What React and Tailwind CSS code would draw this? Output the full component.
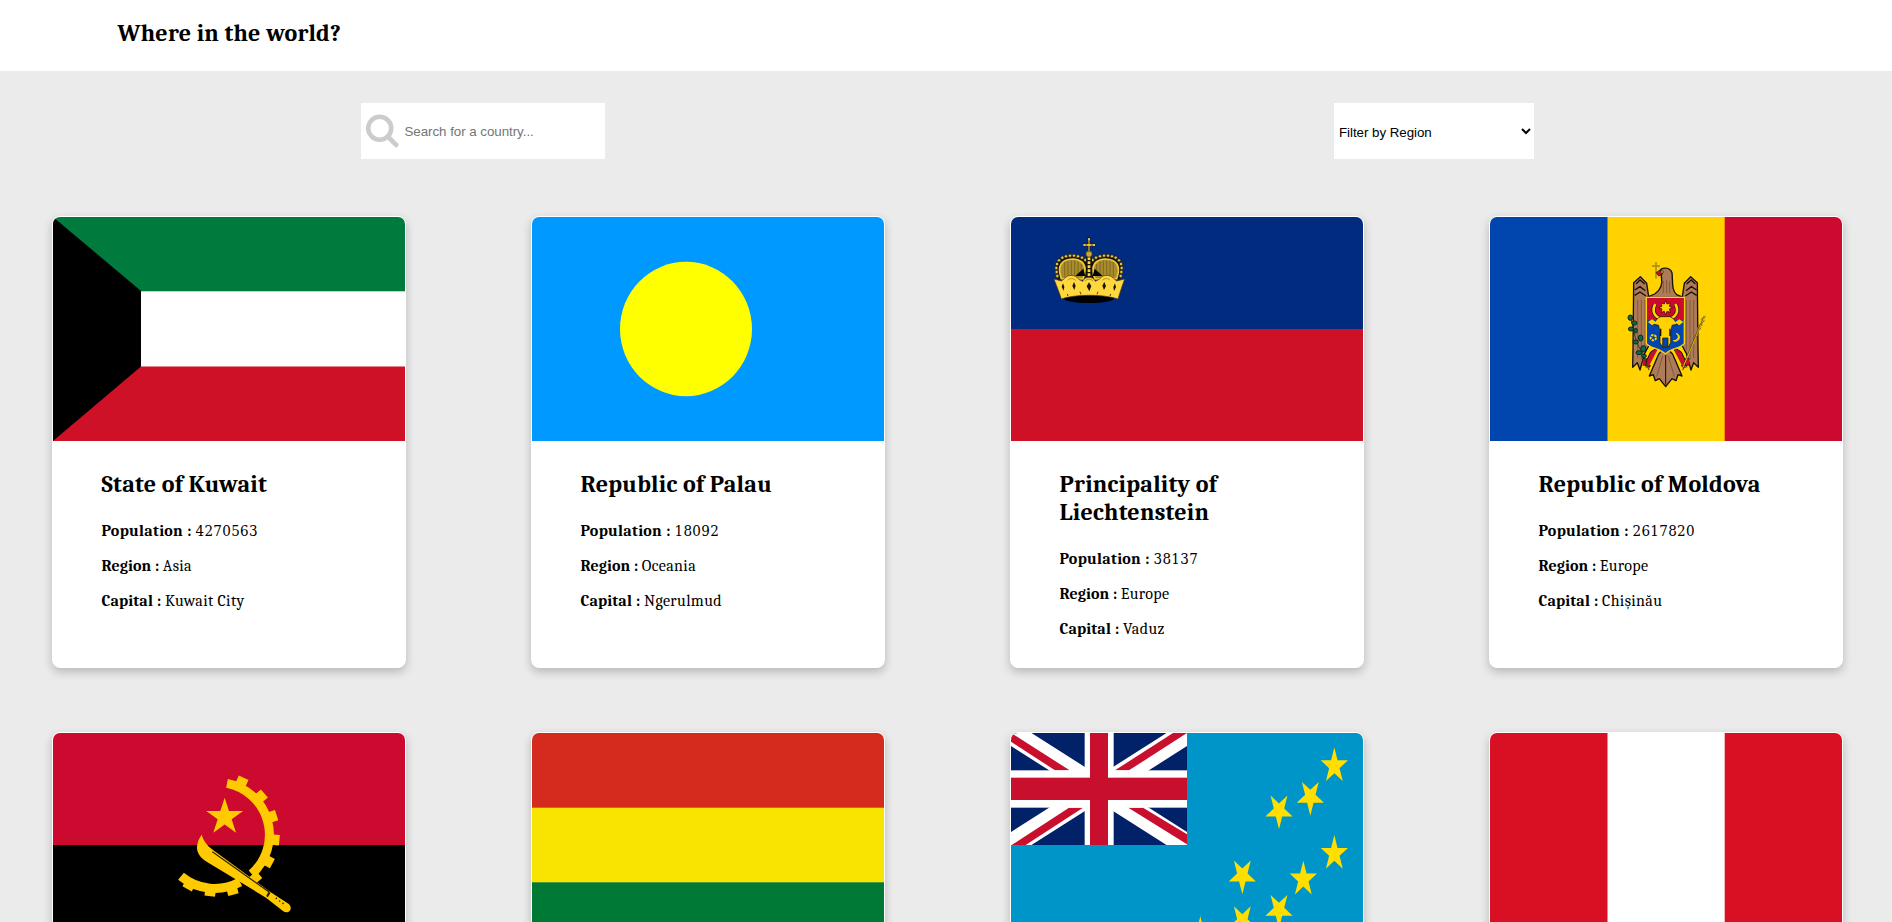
import React from "react";

function starPoints(cx, cy, rx, ry, down = false) {
  const pts = [];
  for (let i = 0; i < 10; i++) {
    const k = i % 2 ? 0.382 : 1;
    const a = (Math.PI / 5) * i;
    const dy = -Math.cos(a) * ry * k;
    pts.push(`${cx + Math.sin(a) * rx * k},${cy + (down ? -dy : dy)}`);
  }
  return pts.join(" ");
}

function Flag({ children }) {
  return (
    <svg viewBox="0 0 352 224" preserveAspectRatio="none" className="block h-[224px] w-full rounded-t-[7px]">
      {children}
    </svg>
  );
}

const Kuwait = () => (
  <Flag>
    <rect width="352" height="224" fill="#fff" />
    <rect width="352" height="74.300" fill="#007a3d" />
    <rect y="149.500" width="352" height="74.500" fill="#ce1126" />
    <path d="M0 0 88 74v75.500L0 224z" fill="#000" />
  </Flag>
);

const Palau = () => (
  <Flag>
    <rect width="352" height="224" fill="#0099ff" />
    <ellipse cx="154" cy="112" rx="66" ry="67.200" fill="#ffff00" />
  </Flag>
);

function Crown() {
  const beads = [
    [82, 168], [80, 156], [79, 144], [81, 132], [87, 121], [97, 113], [108, 109], [120, 107], [132, 107], [144, 109], [156, 113], [166, 120],
  ];
  return (
    <g transform="translate(19 3) scale(.33333)">
      <path d="M84 178C74 140 82 112 118 108c26-2 48 6 59 20 11-14 33-22 59-20 36 4 44 32 34 70z" fill="#111" />
      <path d="M94 176c-14-38 0-58 34-59 22 0 36 12 37 30 0 14-2 22-6 30zM260 176c14-38 0-58-34-59-22 0-36 12-37 30 0 14 2 22 6 30z" fill="#a88c2e" stroke="#f0ca3c" strokeWidth="5" />
      <path d="M104 126v44M114 122v44M124 122v44M134 122v44M144 124v40M154 132v34M250 126v44M240 122v44M230 122v44M220 122v44M210 124v40M200 132v34" stroke="#6b571a" strokeWidth="2" />
      <path d="M136 168l24-22 6 22zM218 168l-24-22-6 22z" fill="#000" />
      {beads.map(([x, y]) => (
        <g key={`${x}-${y}`} fill="#e6c244" stroke="#1c1808" strokeWidth="2">
          <circle cx={x} cy={y} r="5" />
          <circle cx={354 - x} cy={y} r="5" />
        </g>
      ))}
      <path d="M177 112v62" stroke="#1a1505" strokeWidth="17" />
      <path d="M177 112v56" stroke="#ffd83d" strokeWidth="8" strokeDasharray="8 4" />
      <circle cx="177" cy="102" r="9.500" fill="#c9a838" stroke="#3f330e" strokeWidth="2" />
      <path d="M177 52v42M160 75h35" stroke="#15140c" strokeWidth="8" />
      <path d="M177 55v38M163 75h29" stroke="#c9a838" strokeWidth="4" />
      <path d="M174 58h6M163 72v6M192 72v6M172 75h10" stroke="#e9c53f" strokeWidth="6" />
      <ellipse cx="177" cy="236" rx="75" ry="13" fill="#000" />
      <path d="M72 177l22 6 10-8c8-12 34-12 42 3l12 6c6-16 32-16 38 0l12-6c8-15 34-15 42-3l10 8 24-6c-8 22-14 40-20 60-44-15-128-15-170 0-6-20-14-38-22-60z" fill="#ffd83d" stroke="#4a3b0e" strokeWidth="2" />
      <path d="M113 181c6-7 18-7 24 0M165 184c6-9 18-9 24 0M217 181c6-7 18-7 24 0" fill="none" stroke="#b08d20" strokeWidth="3" />
      <path d="M99 190l4 10-2 12-6-12zM132 186l5 11-4 13-6-12zM177 187l7 11-6 16-8-15zM223 186l5 12-6 12-5-13zM255 190l3 12-6 11-2-12z" fill="#1a1505" />
      <path d="M150 215l3 8M204 215l-3 8M112 222l2 6M242 222l-2 6" stroke="#4a3b0e" strokeWidth="3" />
    </g>
  );
}

const Liechtenstein = () => (
  <Flag>
    <rect width="352" height="112" fill="#002b7f" />
    <rect y="112" width="352" height="112" fill="#ce1126" />
    <Crown />
  </Flag>
);

function Eagle() {
  return (
    <g transform="translate(110 33) scale(.33333)">
      <path d="M168 36v50M156 48h24" stroke="#a08418" strokeWidth="4" />
      <g fill="#ad7b58" stroke="#15100c" strokeWidth="4" strokeLinejoin="round">
        <path d="M121 80l-20 18-2 196-1 58 14-14 8 22 14-50 12-22V140l-6-40z" />
        <path d="M272 80l20 18 2 196 1 58-14-14-8 22-14-50-12-22V140l6-40z" />
        <path d="M180 62c4-10 30-12 36 6 3 30-2 52 14 66l20 8H140l24-10c22-14 24-34 20-54z" />
        <path d="M196 290l-20 22-28 66 12-4 6 18 12-6 19 24 19-24 12 6 6-18 12 4-28-66z" />
      </g>
      <path d="M113 150v175M124 150v180M135 150v150M259 150v150M270 150v180M281 150v175M188 318l-18 62M205 318l18 62M190 94v36M200 90v40M209 94v36" stroke="#6b4a35" strokeWidth="2" />
      <path d="M197 312v92" stroke="#15100c" strokeWidth="3" />
      <path d="M108 102l12-12 14 12M104 120l16-10 16 12M104 136l16-10 18 12M286 102l-12-12-14 12M290 120l-16-10-16 12M290 136l-16-10-18 12" fill="none" stroke="#15100c" strokeWidth="4" />
      <path d="M180 60l-12 8 8 10 12-6z" fill="#c8102e" stroke="#15100c" strokeWidth="2" />
      <circle cx="186" cy="66" r="4" fill="#ffd200" stroke="#15100c" strokeWidth="2" />
      <path d="M134 344l18-38 22-14-2 14-24 46z" fill="#c8102e" stroke="#15100c" strokeWidth="3" />
      <path d="M262 344l-18-38-22-14 2 14 24 46z" fill="#c8102e" stroke="#15100c" strokeWidth="3" />
      <path d="M176 300l-24 46M218 300l24 46" stroke="#ffd200" strokeWidth="7" />
      <path d="M128 326h12v20h-12M268 326h-12v20h12" fill="#c8102e" stroke="#15100c" strokeWidth="2" />
      <path d="M88 200c8 10 10 30 14 46 4 20 12 46 26 62l12 40" fill="none" stroke="#20402c" strokeWidth="3" />
      <g fill="#0a6b48" stroke="#14241b" strokeWidth="3">
        <ellipse cx="91" cy="203" rx="7" ry="8" />
        <ellipse cx="103" cy="219" rx="8" ry="6" />
        <ellipse cx="93" cy="237" rx="8" ry="6" />
        <ellipse cx="107" cy="242" rx="5" ry="7" />
        <ellipse cx="122" cy="264" rx="7" ry="9" />
        <ellipse cx="107" cy="276" rx="8" ry="6" />
        <ellipse cx="130" cy="296" rx="8" ry="9" />
        <ellipse cx="117" cy="308" rx="9" ry="6" />
        <ellipse cx="132" cy="318" rx="7" ry="5" />
      </g>
      <path d="M314 198l-20 44-20 50-26 62" fill="none" stroke="#5d4b10" strokeWidth="5" />
      <path d="M316 196l-20 44-20 50-28 64" fill="none" stroke="#e6bd14" strokeWidth="3" />
      <path d="M302 208l14-8M298 224l16-12M292 244l12-10M284 262l14-8M304 212l2 16M292 232l2 18" stroke="#8a701a" strokeWidth="3" />
      <path d="M139 142h114v138c-12 16-40 14-57 32-17-18-45-16-57-32z" fill="#0046ae" stroke="#ffd200" strokeWidth="4" />
      <path d="M141 144h110v66H141z" fill="#cc092f" />
      <path d="M166 162c-14 24 2 42 20 44h20c18-2 34-20 20-44" fill="none" stroke="#15100c" strokeWidth="12" />
      <path d="M166 162c-14 24 2 42 20 44h20c18-2 34-20 20-44" fill="none" stroke="#ffd200" strokeWidth="8" />
      <path d="M172 206l10-6h28l10 6 12 16-16 4-4 22v30l-8 14h-16l-8-14v-30l-4-22-16-4z" fill="#ffd200" stroke="#15100c" strokeWidth="2" />
      <path d="M182 236v22M210 236v22" stroke="#15100c" strokeWidth="4" />
      <path d="M188 264h16v26h-16z" fill="#0046ae" stroke="#15100c" strokeWidth="2" />
      <path d="M197 152l4 10 10-3-3 10 9 4-9 4 3 10-10-3-4 10-4-10-10 3 3-10-9-4 9-4-3-10 10 3z" fill="#ffd200" stroke="#15100c" strokeWidth="2" />
      <path d="M144 216l12-8 13 9-13 9zM225 217l13-9 12 8-12 10z" fill="#ffd200" />
      <circle cx="160" cy="263" r="8" fill="none" stroke="#ffd200" strokeWidth="6" strokeDasharray="7 3" />
      <path d="M228 250c10 4 10 22-8 22 16 8 28-16 8-22z" fill="#ffd200" stroke="#ffd200" strokeWidth="3" />
      <path d="M136 350l8 2 3 8M262 350l-10 2-4 8" fill="none" stroke="#6b5410" strokeWidth="4" />
    </g>
  );
}

const Moldova = () => (
  <Flag>
    <rect width="118" height="224" fill="#0046ae" />
    <rect x="117.500" width="117.500" height="224" fill="#ffd200" />
    <rect x="234.700" width="117.300" height="224" fill="#cc092f" />
    <Eagle />
  </Flag>
);

const GEAR_TEETH = [-65, -41, -18, 5.5, 28, 49, 75, 97, 119];

const Angola = () => (
  <Flag>
    <rect width="352" height="112" fill="#cc092f" />
    <rect y="112" width="352" height="112" fill="#000" />
    <g transform="translate(107 27) scale(.33333)" fill="#ffcb00">
      <path d="M201 70A157 157 0 0 1 275 342M240 366A158 158 0 0 1 63 349" fill="none" stroke="#ffcb00" strokeWidth="27" />
      {GEAR_TEETH.map((a) => (
        <rect key={a} x="160" y="-16" width="27" height="32" transform={`translate(172 223) rotate(${a})`} />
      ))}
      <polygon points={starPoints(194, 171, 58, 58)} />
      <path d="M125 224c-12 16-16 34-13 48 4 14 14 24 28 33l178 108 48 38c8 8 20 8 25-1 4-10-2-16-8-20l-52-34L158 269c-18-14-26-24-33-45z" />
      <path d="M157 275l170 121-7 13M322 411l8-13" fill="none" stroke="#2b2200" strokeWidth="3.500" />
      <g fill="#2b2200">
        <circle cx="349" cy="415" r="2.500" />
        <circle cx="359" cy="423" r="2.500" />
        <circle cx="369" cy="430" r="2.500" />
      </g>
    </g>
  </Flag>
);

const Bolivia = () => (
  <Flag>
    <rect width="352" height="75" fill="#d52b1e" />
    <rect y="74.700" width="352" height="75" fill="#f9e300" />
    <rect y="149.300" width="352" height="75" fill="#007934" />
  </Flag>
);

const STARS_UP = [[1003, 138], [1003, 401], [910, 478], [601, 645]];
const STARS_DOWN = [[931, 231], [837, 272], [727, 467], [837, 570], [727, 604]];

const Tuvalu = () => (
  <Flag>
    <rect width="352" height="224" fill="#0095c8" />
    <svg width="176" height="112" viewBox="0 0 528 336" preserveAspectRatio="none">
      <rect width="528" height="336" fill="#012169" />
      <path d="M0 0l528 336M528 0L0 336" stroke="#fff" strokeWidth="66" />
      <g fill="#c8102e">
        <path d="M0 4v22l132 86h44L10 6z" />
        <path d="M528 0h-42L312 112h42z" />
        <path d="M2 336h42l172-112h-42z" />
        <path d="M528 334v-30L396 224h-44z" />
      </g>
      <path d="M265 0v336M0 168h528" stroke="#fff" strokeWidth="86" className="hidden" />
      <rect x="221" width="87" height="336" fill="#fff" />
      <rect y="112" width="528" height="112" fill="#fff" />
      <rect x="237" width="54" height="336" fill="#c8102e" />
      <rect y="134" width="528" height="67" fill="#c8102e" />
    </svg>
    <g transform="translate(-11 -13) scale(.33333)" fill="#ffde00">
      {STARS_UP.map(([x, y]) => (
        <polygon key={`u${x}-${y}`} points={starPoints(x, y, 43, 56)} />
      ))}
      {STARS_DOWN.map(([x, y]) => (
        <polygon key={`d${x}-${y}`} points={starPoints(x, y, 43, 56, true)} />
      ))}
    </g>
  </Flag>
);

const Peru = () => (
  <Flag>
    <rect width="352" height="224" fill="#d91023" />
    <rect x="117.500" width="117.200" height="224" fill="#fff" />
  </Flag>
);

const countries = [
  { id: "kw", Art: Kuwait, name: "State of Kuwait", population: "4270563", region: "Asia", capital: "Kuwait City" },
  { id: "pw", Art: Palau, name: "Republic of Palau", population: "18092", region: "Oceania", capital: "Ngerulmud" },
  { id: "li", Art: Liechtenstein, name: "Principality of Liechtenstein", population: "38137", region: "Europe", capital: "Vaduz" },
  { id: "md", Art: Moldova, name: "Republic of Moldova", population: "2617820", region: "Europe", capital: "Chișinău" },
  { id: "ao", Art: Angola },
  { id: "bo", Art: Bolivia },
  { id: "tv", Art: Tuvalu },
  { id: "pe", Art: Peru },
];

const labelTracking = {
  Population: "tracking-[0.28px]",
  Region: "tracking-[0.04px]",
  Capital: "tracking-[0.14px]",
};

function Fact({ label, value, numeric }) {
  return (
    <p className="whitespace-nowrap text-base leading-[19px]">
      <b className={labelTracking[label]}>{label} : </b>
      <span className={numeric ? "font-['DejaVu_Serif_Condensed',serif] text-[15px] leading-none tracking-[0.34px]" : "tracking-[0.36px]"}>
        {value}
      </span>
    </p>
  );
}

function Card({ country }) {
  const { Art, name, population, region, capital } = country;
  return (
    <article className="h-[452px] rounded-lg border border-white bg-white shadow-[0_4px_10px_rgba(0,0,0,0.22)]">
      <Art />
      {name && (
        <div className="flex flex-col gap-4 pt-[29px] pr-12 pl-[48.5px]">
          <h2 className="mb-2 text-2xl leading-7 font-bold tracking-[0.26px]">{name}</h2>
          <Fact label="Population" value={population} numeric />
          <Fact label="Region" value={region} />
          <Fact label="Capital" value={capital} />
        </div>
      )}
    </article>
  );
}

export default function App() {
  return (
    <div className="h-screen overflow-hidden bg-[#ebebeb] font-[Cambria,Caladea,serif] text-black">
      <header className="flex h-[71px] items-start bg-white pt-[19px] pl-[117.5px]">
        <h1 className="text-2xl leading-7 font-bold tracking-[0.22px]">Where in the world?</h1>
      </header>
      <div className="mt-8 flex justify-between pr-[358px] pl-[361px]">
        <label className="flex h-14 w-[244px] items-center bg-white pl-[5px]">
          <svg width="33" height="34" viewBox="0 0 33 34" fill="none" stroke="#ccc" strokeLinecap="round" className="shrink-0">
            <circle cx="13.700" cy="14.300" r="11.500" strokeWidth="4.600" />
            <path d="M22.500 23.300l7.600 7.600" strokeWidth="4.800" />
          </svg>
          <input
            placeholder="Search for a country..."
            className="ml-[5.5px] w-[190px] pt-0.5 font-['Liberation_Sans',sans-serif] text-[13.333px] tracking-[-0.04px] outline-none placeholder:text-[#757575]"
          />
        </label>
        <select className="h-14 w-[200px] bg-white px-px pt-0.5 font-['Liberation_Sans',sans-serif] text-[13.333px] tracking-[-0.04px] text-black outline-none">
          <option>Filter by Region</option>
        </select>
      </div>
      <main className="mt-[57px] grid grid-cols-[repeat(4,354px)] gap-x-[125px] gap-y-16 pl-[52px]">
        {countries.map((c) => (
          <Card key={c.id} country={c} />
        ))}
      </main>
    </div>
  );
}
